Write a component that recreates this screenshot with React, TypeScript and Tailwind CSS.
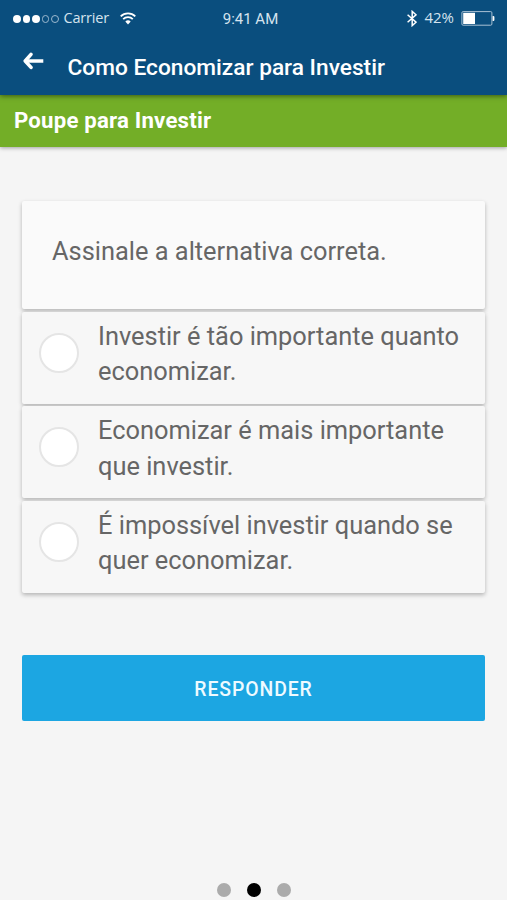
import { useState } from 'react'

interface Option {
  id: string
  label: string
}

const options: Option[] = [
  { id: 'a', label: 'Investir é tão importante quanto economizar.' },
  { id: 'b', label: 'Economizar é mais importante que investir.' },
  { id: 'c', label: 'É impossível investir quando se quer economizar.' },
]

const signal = [true, true, true, false, false]

function WifiIcon() {
  return (
    <svg width="16" height="13" viewBox="0 0 16 13" fill="none" stroke="#fff" strokeWidth="1.8">
      <path d="M0.7 4.3a10.4 10.4 0 0 1 14.6 0" />
      <path d="M3.2 7.1a6.8 6.8 0 0 1 9.6 0" />
      <path d="M8 12.4 5.3 9.6a3.9 3.9 0 0 1 5.4 0Z" fill="#fff" stroke="none" />
    </svg>
  )
}

function BluetoothIcon() {
  return (
    <svg width="10" height="17" viewBox="0 0 10 17" fill="none" stroke="#fff" strokeWidth="1.5">
      <path d="M0.6 4.8 9 12.2 5.2 15.6V1.4L9 4.8 0.6 12.2" />
    </svg>
  )
}

function BatteryIcon() {
  return (
    <svg width="34" height="15" viewBox="0 0 34 15" fill="none">
      <rect x="0.9" y="0.6" width="30" height="13.6" rx="1.2" stroke="#a9c1d4" />
      <rect x="2.2" y="1.8" width="11.8" height="11.2" fill="#fff" />
      <path d="M31.6 5h0.8a1 1 0 0 1 1 1v3a1 1 0 0 1-1 1h-0.8Z" fill="#fff" />
    </svg>
  )
}

function BackIcon() {
  return (
    <svg width="22" height="18" viewBox="0 0 22 18" fill="none" stroke="#fff" strokeWidth="3.5" strokeLinejoin="round">
      <path d="M9 2.4 3.2 9 9 15.4" strokeLinecap="round" />
      <path d="M3 9h18.3" />
    </svg>
  )
}

function StatusBar() {
  return (
    <div className="grid h-9 grid-cols-3 items-center pr-3 pl-[13px] font-['Open_Sans',sans-serif] text-[14.5px] text-[#d5e3ee]">
      <div className="flex items-center">
        <div className="flex items-center gap-[2px] pt-[2px]">
          {signal.map((on, i) => (
            <span
              key={i}
              className={on ? 'size-[7.5px] rounded-full bg-white' : 'size-[7.5px] rounded-full border border-[#9db9cf]'}
            />
          ))}
        </div>
        <span className="ml-[5px] tracking-[-0.2px]">Carrier</span>
        <span className="ml-[11.5px]">
          <WifiIcon />
        </span>
      </div>
      <div className="pt-[2px] pr-[7px] text-center font-[Roboto,sans-serif] text-[15px]">9:41 AM</div>
      <div className="flex items-center justify-end">
        <BluetoothIcon />
        <span className="mr-[7px] mb-[1px] ml-[7px] text-[15px]">42%</span>
        <BatteryIcon />
      </div>
    </div>
  )
}

export default function App() {
  const [selected, setSelected] = useState<string | null>(null)

  return (
    <div className="flex h-[900px] w-[507px] flex-col overflow-hidden bg-[#f5f5f5] font-[Roboto,sans-serif]">
      <header className="relative z-20 h-[95px] bg-[#0a4e7e] shadow-[0_1px_5px_rgba(0,0,0,0.5)]">
        <StatusBar />
        <div className="flex pl-[22px]">
          <button className="mt-[16px] h-[18px]" aria-label="Voltar">
            <BackIcon />
          </button>
          <h1 className="ml-[23.5px] pt-[16px] text-[22.7px] leading-8 font-medium text-white">Como Economizar para Investir</h1>
        </div>
      </header>

      <div className="relative z-10 flex h-[52px] items-center bg-[#73ae27] pl-[14px] text-[22.2px] font-bold tracking-[0.2px] text-white shadow-[0_1px_4px_rgba(0,0,0,0.35)]">
        Poupe para Investir
      </div>

      <main className="flex flex-1 flex-col px-[22px] pt-[54px] text-[25.4px] leading-[35.4px] text-[#666]">
        {/* Question */}
        <div className="flex h-[108px] items-center rounded-xs bg-[#fafafa] pb-[7px] pl-[30px] shadow-[0_2px_4px_rgba(0,0,0,0.27)]">
          Assinale a alternativa correta.
        </div>

        {/* Answers */}
        <div className="mt-[3px] flex flex-col gap-[2.4px]">
          {options.map((option) => (
            <button
              key={option.id}
              onClick={() => setSelected(option.id)}
              className="flex h-[92px] rounded-xs bg-[#f7f7f7] pl-[17px] text-left shadow-[0_2px_4px_rgba(0,0,0,0.27)]"
            >
              <span
                className={`mt-[21px] size-10 shrink-0 rounded-full border-2 border-[#e5e5e5] ${
                  selected === option.id ? 'bg-[#1ca6e2]' : 'bg-white'
                }`}
              />
              <span className="ml-[19px] w-[375px] pt-[7px]">{option.label}</span>
            </button>
          ))}
        </div>

        <button className="mt-[62.2px] h-[66px] rounded-xs bg-[#1ca6e2] pt-[3px] text-[19.4px] font-medium tracking-[0.9px] text-[#eefaff]">
          RESPONDER
        </button>

        {/* Page dots */}
        <div className="mt-auto flex justify-center gap-4 pb-[3px]">
          <span className="size-[14px] rounded-full bg-[#ababab]" />
          <span className="size-[14px] rounded-full bg-black" />
          <span className="size-[14px] rounded-full bg-[#ababab]" />
        </div>
      </main>
    </div>
  )
}
